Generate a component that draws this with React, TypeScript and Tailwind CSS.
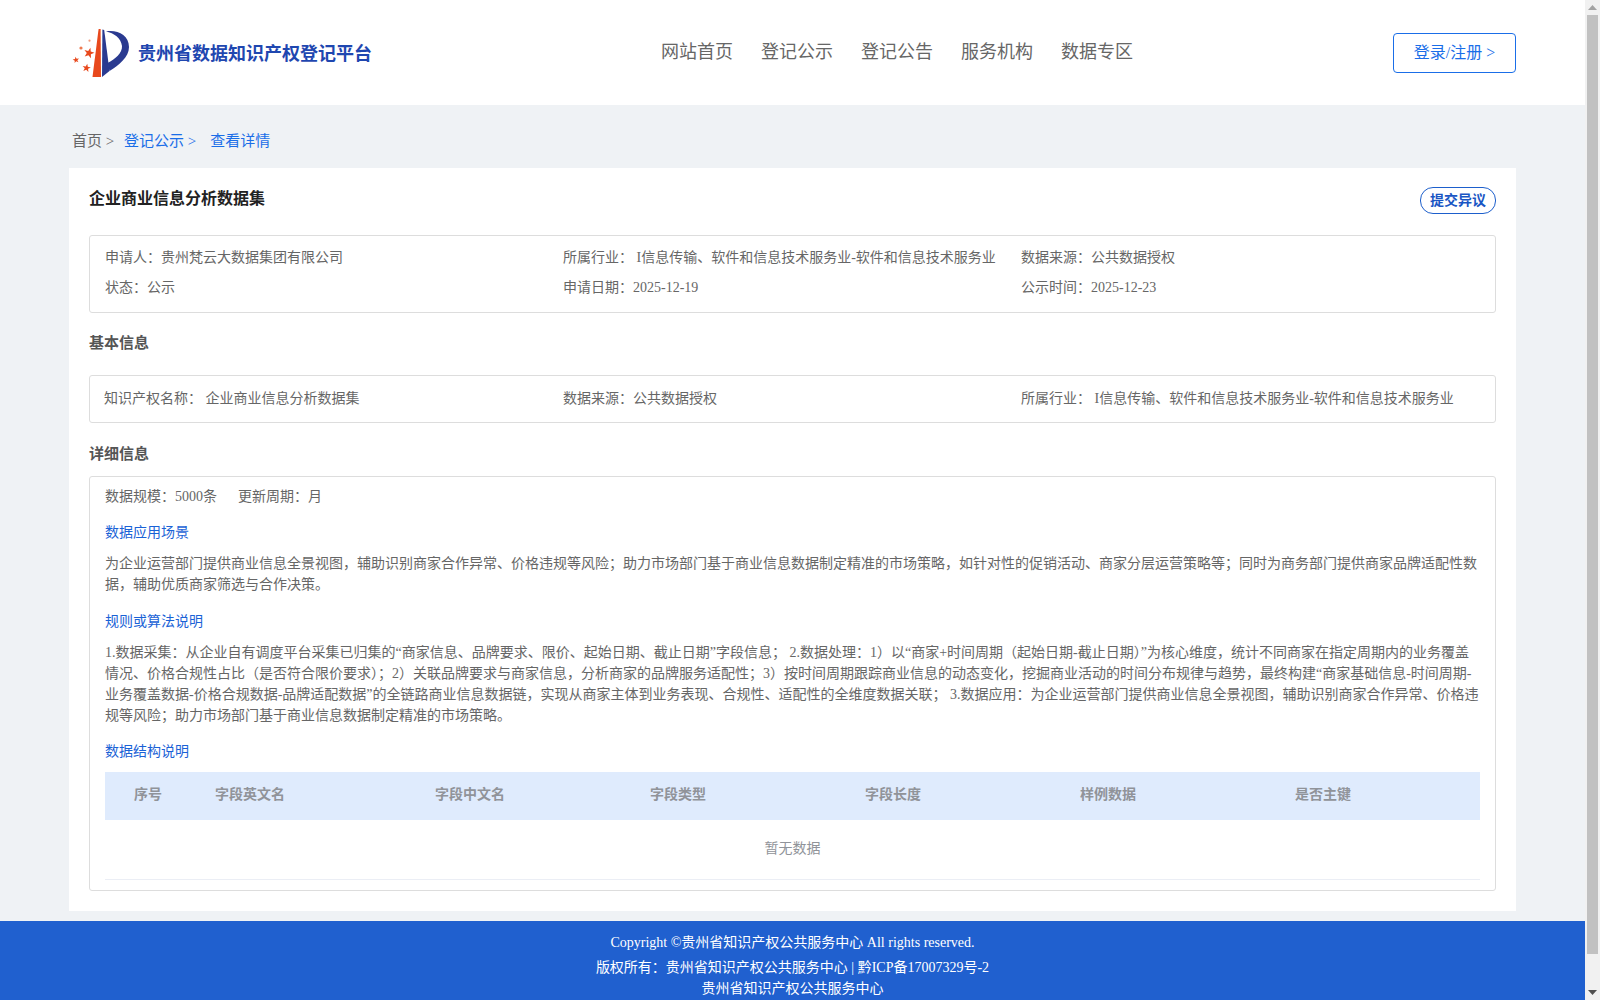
const NAV = ['网站首页', '登记公示', '登记公告', '服务机构', '数据专区'];
const TABLE_HEAD = ['序号', '字段英文名', '字段中文名', '字段类型', '字段长度', '样例数据', '是否主键'];
const INDUSTRY = 'I信息传输、软件和信息技术服务业-软件和信息技术服务业';

function starPoints(cx: number, cy: number, r: number, rot: number) {
  const pts: string[] = [];
  for (let i = 0; i < 10; i++) {
    const rad = i % 2 === 0 ? r : r * 0.4;
    const a = ((rot + i * 36 - 90) * Math.PI) / 180;
    pts.push(`${cx + rad * Math.cos(a)},${cy + rad * Math.sin(a)}`);
  }
  return pts.join(' ');
}

function Logo() {
  return (
    <svg viewBox="0 0 80 65" className="w-[80px] h-[65px] shrink-0 -ml-[7px] -mt-[1px]">
      <path d="M33.6 9 L35.6 9 L36 57 L27.5 57 Z" fill="#e8481c" />
      <path d="M37.4 9.5 L39.2 10 L44.5 51 L37 57 Z" fill="#2a3a90" />
      <path d="M41 11.5 C52 9.5 64 15 64 27 C64 37 54 45 44.5 51 L42.5 43 C50 39 57.5 33 57 26 C56 18 49 13 41 11.5 Z" fill="#2a3a90" />
      <polygon points={starPoints(24, 33, 5.5, 15)} fill="#e8481c" />
      <polygon points={starPoints(11, 40, 3.4, -10)} fill="#e8481c" />
      <polygon points={starPoints(21.5, 48, 4.4, 10)} fill="#e8481c" />
      <circle cx="16" cy="28" r="1.6" fill="#ee7a50" />
      <circle cx="24.5" cy="20.7" r="1.1" fill="#f09a7c" />
    </svg>
  );
}

function Scrollbar() {
  return (
    <div className="w-[15px] h-full shrink-0 bg-[#f1f1f1] flex flex-col items-center">
      <div className="h-[15px] flex items-center justify-center">
        <svg width="9" height="5" viewBox="0 0 9 5"><path d="M4.5 0 L9 5 L0 5 Z" fill="#a3a3a3" /></svg>
      </div>
      <div className="w-[11px] h-[939px] bg-[#c1c1c1]" />
      <div className="flex-1 flex items-end pb-[5px]">
        <svg width="9" height="5" viewBox="0 0 9 5"><path d="M0 0 L9 0 L4.5 5 Z" fill="#505050" /></svg>
      </div>
    </div>
  );
}

function SubTitle({ children }: { children: string }) {
  return <p className="text-[14px] leading-[21px] text-[#1a62d6]">{children}</p>;
}

export default function App() {
  return (
    <div
      className="flex h-screen overflow-hidden bg-[#eff2f5] text-[#666] text-[14px]"
      style={{ fontFamily: '"Liberation Serif", "Noto Sans CJK SC", serif' }}
    >
      <div className="flex-1 min-w-0 h-full overflow-hidden">
        {/* Header */}
        <header className="h-[105px] bg-white flex items-center">
          <div className="w-[590px] pl-[72px] flex items-center">
            <Logo />
            <h1 className="text-[18px] font-bold text-[#1f47b0] -ml-[7px] mt-[3px] whitespace-nowrap">贵州省数据知识产权登记平台</h1>
          </div>
          <nav className="flex gap-[28px] text-[18px] text-[#666] -mt-[1px] ml-[71px]">
            {NAV.map((n) => (
              <span key={n}>{n}</span>
            ))}
          </nav>
          <button className="ml-auto mr-[69px] mt-[1px] w-[123px] h-[40px] border border-[#1a6ee8] rounded-[4px] text-[16px] text-[#1a6ee8]">
            登录/注册 &gt;
          </button>
        </header>

        {/* Breadcrumb */}
        <div className="h-[63px] pl-[72px] pt-[9px] flex items-center text-[15px] whitespace-pre">
          <span>首页 &gt; </span>
          <span className="text-[#1a6ee8] ml-[6px]">登记公示 &gt;</span>
          <span className="text-[#1a6ee8] ml-[14px]">查看详情</span>
        </div>

        {/* Card */}
        <main className="mx-[69px] bg-white px-[20px] pt-[20px] pb-[20px]">
          <div className="flex items-start justify-between mb-[20px]">
            <h2 className="text-[16px] leading-[22px] font-bold text-[#222]">企业商业信息分析数据集</h2>
            <button className="w-[76px] h-[27px] -mt-[1px] mb-[1px] border border-[#1d5fcc] rounded-[13px] text-[14px] font-bold text-[#1a56c4]">
              提交异议
            </button>
          </div>

          <div className="border border-[#ddd] rounded-[3px] pl-[15px] pr-[14px] pt-[6px] pb-[10px] grid grid-cols-[458px_458px_1fr] auto-rows-[30px] items-center">
            <span>申请人：贵州梵云大数据集团有限公司</span>
            <span className="whitespace-nowrap">所属行业： {INDUSTRY}</span>
            <span>数据来源：公共数据授权</span>
            <span>状态：公示</span>
            <span>申请日期：2025-12-19</span>
            <span>公示时间：2025-12-23</span>
          </div>

          <h3 className="mt-[20px] mb-[22px] text-[15px] leading-[20px] font-bold text-[#555]">基本信息</h3>

          <div className="h-[48px] pb-[2px] border border-[#ddd] rounded-[3px] px-[14px] grid grid-cols-[459px_458px_1fr] items-center">
            <span>知识产权名称： 企业商业信息分析数据集</span>
            <span>数据来源：公共数据授权</span>
            <span className="whitespace-nowrap">所属行业： {INDUSTRY}</span>
          </div>

          <h3 className="mt-[21px] mb-[12px] text-[15px] leading-[20px] font-bold text-[#555]">详细信息</h3>

          <div className="border border-[#ddd] rounded-[3px] px-[15px] pt-[9px] pb-[10px]">
            <p className="leading-[21px] flex gap-[21px]">
              <span>数据规模：5000条</span>
              <span>更新周期：月</span>
            </p>
            <div className="mt-[15px]">
              <SubTitle>数据应用场景</SubTitle>
            </div>
            <p className="mt-[10px] leading-[21px]">
              为企业运营部门提供商业信息全景视图，辅助识别商家合作异常、价格违规等风险；助力市场部门基于商业信息数据制定精准的市场策略，如针对性的促销活动、商家分层运营策略等；同时为商务部门提供商家品牌适配性数据，辅助优质商家筛选与合作决策。
            </p>
            <div className="mt-[16px]">
              <SubTitle>规则或算法说明</SubTitle>
            </div>
            <p className="mt-[10px] leading-[21px]">
              1.数据采集：从企业自有调度平台采集已归集的“商家信息、品牌要求、限价、起始日期、截止日期”字段信息； 2.数据处理：1）以“商家+时间周期（起始日期-截止日期）”为核心维度，统计不同商家在指定周期内的业务覆盖情况、价格合规性占比（是否符合限价要求）；2）关联品牌要求与商家信息，分析商家的品牌服务适配性；3）按时间周期跟踪商业信息的动态变化，挖掘商业活动的时间分布规律与趋势，最终构建“商家基础信息-时间周期-业务覆盖数据-价格合规数据-品牌适配数据”的全链路商业信息数据链，实现从商家主体到业务表现、合规性、适配性的全维度数据关联； 3.数据应用：为企业运营部门提供商业信息全景视图，辅助识别商家合作异常、价格违规等风险；助力市场部门基于商业信息数据制定精准的市场策略。
            </p>
            <div className="mt-[15px]">
              <SubTitle>数据结构说明</SubTitle>
            </div>

            <div className="mt-[10px]">
              <div className="h-[48px] pb-[3px] bg-[#dfebfd] grid grid-cols-[110px_220px_215px_215px_215px_215px_1fr] items-center font-bold text-[#909399]">
                {TABLE_HEAD.map((h, i) => (
                  <span key={h} className={i === 0 ? 'pl-[29px]' : ''}>
                    {h}
                  </span>
                ))}
              </div>
              <div className="h-[60px] pb-[2px] flex items-center justify-center border-b border-[#ebeef5] text-[#909399]">
                暂无数据
              </div>
            </div>
          </div>
        </main>

        {/* Footer */}
        <footer className="mt-[10px] h-[90px] bg-[#2060cf] text-white text-center pt-[11px]">
          <p className="leading-[21px]">Copyright ©贵州省知识产权公共服务中心 All rights reserved.</p>
          <p className="leading-[21px] mt-[4px]">版权所有：贵州省知识产权公共服务中心 | 黔ICP备17007329号-2</p>
          <p className="leading-[21px]">贵州省知识产权公共服务中心</p>
        </footer>
      </div>
      <Scrollbar />
    </div>
  );
}
